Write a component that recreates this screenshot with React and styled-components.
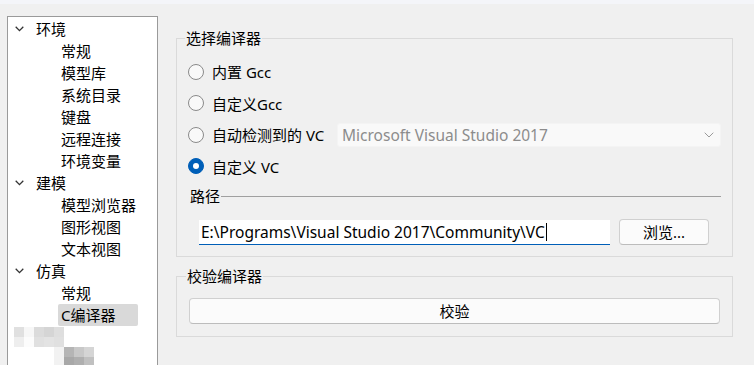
import React from 'react'
import styled, { createGlobalStyle } from 'styled-components'

const GlobalStyle = createGlobalStyle`
	html, body {
		margin: 0;
		padding: 0;
		background: #f0f0f0;
	}
	body {
		font-family: "Noto Sans", "Noto Sans CJK SC", sans-serif;
		font-size: 15px;
		color: #000;
	}
	* {
		box-sizing: border-box;
	}
`

const Window = styled.div`
	width: 754px;
	height: 365px;
	overflow: hidden;
	background: #f0f0f0;
	display: flex;
	flex-direction: column;
`

const TopStrip = styled.div`
	height: 4px;
	flex-shrink: 0;
	background: #f4f5f9;
`

const Body = styled.div`
	display: flex;
	align-items: flex-start;
	padding: 12px 0 0 7px;
`

const Tree = styled.div`
	width: 151px;
	height: 380px;
	flex-shrink: 0;
	background: #fff;
	border: 1px solid #9a9a9a;
	padding-top: 1px;
`

const Row = styled.div`
	height: 22px;
	display: flex;
	align-items: center;
	line-height: 22px;
	white-space: nowrap;
	padding-left: ${(p) => (p.$child ? '50px' : '7px')};
`

const Chevron = styled.svg`
	width: 9px;
	height: 6px;
	margin-right: 12px;
	flex-shrink: 0;
`

const Label = styled.span`
	padding: 0 ${(p) => (p.$selected ? '23px' : '3px')} 0 3px;
	border-radius: 2px;
	background: ${(p) => (p.$selected ? '#d9d9d9' : 'transparent')};
`

const ParentLabel = styled.span`
	line-height: 22px;
`

const Blur = styled.svg`
	display: block;
	margin-top: 1px;
`

const Right = styled.div`
	width: 557px;
	margin-left: 18px;
	display: flex;
	flex-direction: column;
`

const Group = styled.fieldset`
	margin: ${(p) => (p.$first ? '12px' : '9px')} 0 0 0;
	min-width: 0;
	border: 1px solid #dadada;
	padding: 0 ${(p) => p.$pad}px ${(p) => p.$padBottom}px;
`

const Legend = styled.legend`
	padding: 0 1px;
	margin-left: -3px;
	line-height: 20px;
	font-size: 15px;
`

const RadioList = styled.div`
	padding-top: 8px;
	display: flex;
	flex-direction: column;
`

const RadioRow = styled.div`
	height: 31.5px;
	display: flex;
	align-items: center;
	white-space: nowrap;
`

const RadioDot = styled.span`
	width: 16px;
	height: 16px;
	border-radius: 50%;
	flex-shrink: 0;
	display: flex;
	align-items: center;
	justify-content: center;
	border: 1px solid ${(p) => (p.$checked ? '#005fb8' : '#8a8a8a')};
	background: ${(p) => (p.$checked ? '#005fb8' : '#f9f9f9')};
	&::after {
		content: '';
		width: 6px;
		height: 6px;
		border-radius: 50%;
		background: #fff;
		display: ${(p) => (p.$checked ? 'block' : 'none')};
	}
`

const RadioText = styled.span`
	margin-left: 8px;
`

const Combo = styled.div`
	width: 384px;
	height: 24px;
	margin-left: auto;
	display: flex;
	align-items: center;
	justify-content: space-between;
	padding: 0 6px 0 4px;
	font-size: 15.5px;
	background: #f9f9f9;
	border: 1px solid #f4f4f4;
	border-radius: 3px;
	color: #8c8c8c;
`

const PathHeader = styled.div`
	margin-top: 4px;
	height: 20px;
	display: flex;
	align-items: center;
`

const PathLabel = styled.span`
	padding-left: 2px;
	line-height: 20px;
`

const Rule = styled.div`
	flex: 1;
	height: 1px;
	margin-left: 1px;
	background: #a0a0a0;
`

const PathRow = styled.div`
	margin-top: 13px;
	padding-left: 11px;
	display: flex;
	align-items: center;
`

const TextBox = styled.div`
	width: 411px;
	height: 25px;
	display: flex;
	align-items: center;
	padding-left: 2px;
	font-size: 15.5px;
	background: #fff;
	border-bottom: 1px solid #005fb8;
	white-space: nowrap;
`

const Caret = styled.span`
	width: 1px;
	height: 18px;
	margin-left: 1px;
	background: #000;
`

const Button = styled.button`
	height: 26px;
	width: ${(p) => (p.$wide ? '100%' : '90px')};
	margin-left: ${(p) => (p.$wide ? '0' : '9px')};
	margin-top: ${(p) => (p.$wide ? '12px' : '0')};
	font: inherit;
	font-size: 15px;
	color: #000;
	background: #fbfbfb;
	border: 1px solid #d0d0d0;
	border-bottom-color: #bcbcbc;
	border-radius: 4px;
	padding: 0;
	line-height: 22px;
`

const tree = [
	{ label: '环境', children: ['常规', '模型库', '系统目录', '键盘', '远程连接', '环境变量'] },
	{ label: '建模', children: ['模型浏览器', '图形视图', '文本视图'] },
	{ label: '仿真', children: ['常规', 'C编译器'] },
]

const blurBlocks = [
	[14, 327, '#e0e0e0'], [24, 327, '#f7f7f7'], [34, 327, '#dbdbdb'], [44, 327, '#d5d5d5'], [54, 327, '#dedede'],
	[14, 337, '#eeeeee'], [24, 337, '#fcfcfc'], [34, 337, '#e0e0e0'], [44, 337, '#e3e3e3'], [54, 337, '#e0e0e0'],
	[54, 347, '#f2f2f2'], [64, 347, '#b5b5b5'], [74, 347, '#c8c8c8'], [84, 347, '#d5d5d5'],
	[54, 357, '#f2f2f2'], [64, 357, '#a8a8a8'], [74, 357, '#afafaf'], [84, 357, '#c0c0c0'],
]

function Chev({ color = '#333' }) {
	return (
		<Chevron viewBox="0 0 9 6">
			<path d="M0.7 0.8 L4.5 4.6 L8.3 0.8" fill="none" stroke={color} strokeWidth="1.3" />
		</Chevron>
	)
}

function Radio({ checked, children }) {
	return (
		<>
			<RadioDot $checked={checked} />
			<RadioText>{children}</RadioText>
		</>
	)
}

export default function App() {
	return (
		<Window>
			<GlobalStyle />
			<TopStrip />
			<Body>
				<Tree>
					{tree.map((node) => (
						<React.Fragment key={node.label}>
							<Row>
								<Chev />
								<ParentLabel>{node.label}</ParentLabel>
							</Row>
							{node.children.map((c) => (
								<Row $child key={c}>
									<Label $selected={c === 'C编译器'}>{c}</Label>
								</Row>
							))}
						</React.Fragment>
					))}
					<Blur width="94" height="38" viewBox="8 327 94 38">
						{blurBlocks.map(([x, y, fill]) => (
							<rect key={`${x}-${y}`} x={x} y={y} width="10" height="10" fill={fill} />
						))}
					</Blur>
				</Tree>
				<Right>
					<Group $first $pad={11} $padBottom={11}>
						<Legend>选择编译器</Legend>
						<RadioList>
							<RadioRow>
								<Radio>内置 Gcc</Radio>
							</RadioRow>
							<RadioRow>
								<Radio>自定义Gcc</Radio>
							</RadioRow>
							<RadioRow>
								<Radio>自动检测到的 VC</Radio>
								<Combo>
									<span>Microsoft Visual Studio 2017</span>
									<svg width="10" height="6" viewBox="0 0 10 6">
										<path d="M0.7 0.7 L5 5 L9.3 0.7" fill="none" stroke="#9a9a9a" strokeWidth="1" />
									</svg>
								</Combo>
							</RadioRow>
							<RadioRow>
								<Radio checked>自定义 VC</Radio>
							</RadioRow>
						</RadioList>
						<PathHeader>
							<PathLabel>路径</PathLabel>
							<Rule />
						</PathHeader>
						<PathRow>
							<TextBox>
								E:\Programs\Visual Studio 2017\Community\VC
								<Caret />
							</TextBox>
							<Button>浏览...</Button>
						</PathRow>
					</Group>
					<Group $pad={12} $padBottom={12}>
						<Legend>校验编译器</Legend>
						<Button $wide>校验</Button>
					</Group>
				</Right>
			</Body>
		</Window>
	)
}
